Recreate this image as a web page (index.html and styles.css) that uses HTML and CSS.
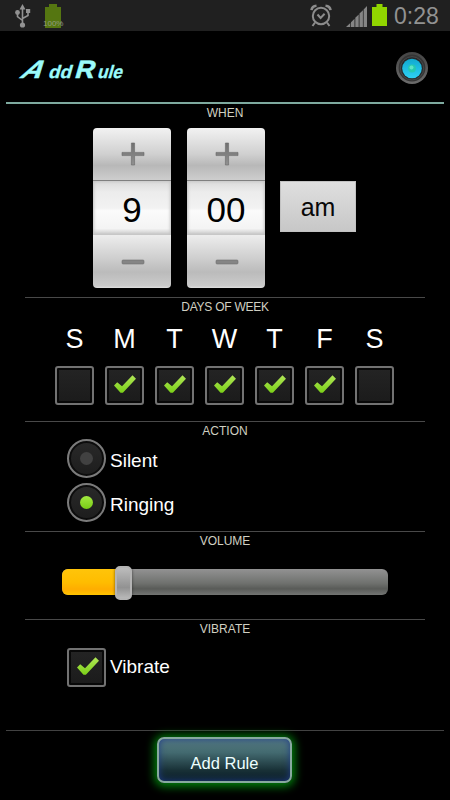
FILE: index.html
```html
<!DOCTYPE html>
<html lang="en">
<head>
<meta charset="utf-8">
<title>Add Rule</title>
<link rel="stylesheet" href="styles.css">
</head>
<body>
<svg class="defs" width="0" height="0" aria-hidden="true">
  <defs>
    <linearGradient id="green" x1="0" y1="0" x2="0" y2="1"><stop offset="0" stop-color="#b1e657"/><stop offset="1" stop-color="#7bd018"/></linearGradient>
    <linearGradient id="sign" x1="0" y1="0" x2="0" y2="1"><stop offset="0" stop-color="#707070"/><stop offset="1" stop-color="#909090"/></linearGradient>
    <symbol id="check" viewBox="0 0 24 20"><path fill="url(#green)" d="M1 11.5 4.2 8.3 9 12.2 19.5 1.2 23 4.700 9.900 18.800 7.500 18.800Z"/></symbol>
    <symbol id="plus" viewBox="0 0 24 24"><path fill="url(#sign)" stroke="#686868" stroke-width=".6" d="M10.4 1h3.2v9.4H23v3.2h-9.4V23h-3.2v-9.4H1v-3.2h9.4Z"/></symbol>
    <symbol id="minus" viewBox="0 0 24 24"><rect x="1" y="10" width="22" height="4" rx="1" fill="#858585" stroke="#707070" stroke-width=".6"/></symbol>
  </defs>
</svg>
<div class="screen">
  <div class="status">
    <svg class="usb" width="16" height="24" viewBox="0 0 16 24" fill="none" stroke="#929292" stroke-width="1.600"><path d="M7.500 4v17M2.500 9v3.500L7.500 16.500M13 7v4.500L7.500 14.500"/><path fill="#929292" stroke="none" d="M7.500 0 10.500 5.500H4.500ZM11 5h4.200v4H11z"/><circle cx="2.500" cy="8.500" r="2.400" fill="#929292" stroke="none"/><circle cx="7.500" cy="21" r="2.600" fill="#929292" stroke="none"/></svg>
    <div class="charge"><svg width="16" height="24" viewBox="0 0 16 24"><path fill="#557611" d="M4 0h8v3h4v21H0V3h4Z"/></svg><span>100%</span></div>
    <svg class="alarm" width="22" height="24" viewBox="0 0 22 24" fill="none" stroke="#8c8c8c" stroke-width="2"><circle cx="11" cy="12" r="8.2"/><path d="M7.5 10.5 10.6 14l4-4.3M5 18.5 2.5 22M17 18.5l2.5 3.5"/><path d="M1.5 6.2Q2 2 6.5 1.7M20.5 6.2Q20 2 15.5 1.7" stroke-width="2.6"/></svg>
    <svg class="signal" width="21" height="21" viewBox="0 0 21 21" fill="#858585"><path d="M0 21 4.300 17v4ZM5 16.2l3.500-3.500V21H5ZM9.3 11.8l3.400-3.300V21h-3.400ZM13.5 7.5l3.400-3.300V21h-3.400ZM17.6 3.4 21 0v21h-3.4Z"/></svg>
    <svg class="battery" width="15" height="22" viewBox="0 0 15 22"><path fill="#91d500" d="M4.5 0h6v3H15v19H0V3h4.500Z"/></svg>
    <span class="clock">0:28</span>
  </div>
  <header class="header">
    <h1 class="title"><span class="cap cap-a">A</span><span class="rest dd">dd</span><span class="cap cap-r">R</span><span class="rest ule">ule</span></h1>
    <svg class="speaker" width="34" height="34" viewBox="0 0 34 34">
      <defs>
        <linearGradient id="ring" x1="0" y1="0" x2="0" y2="1"><stop offset="0" stop-color="#444"/><stop offset="1" stop-color="#6c6c6c"/></linearGradient>
        <linearGradient id="cone" x1="0" y1="0" x2="0" y2="1"><stop offset="0" stop-color="#10a9cf"/><stop offset="1" stop-color="#2ed0f4"/></linearGradient>
      </defs>
      <circle cx="17" cy="17" r="16" fill="url(#ring)"/><circle cx="17" cy="17" r="13.4" fill="#353535"/><circle cx="17" cy="17.300" r="11.600" fill="#26292b" stroke="#565656" stroke-width=".7"/><circle cx="17" cy="17.500" r="9.800" fill="url(#cone)"/><circle cx="17" cy="17.500" r="3.900" fill="#25c9b0"/><circle cx="16.500" cy="16.500" r="2" fill="#5ce4c5"/>
    </svg>
  </header>
  <main class="form">
    <section class="section when">
      <h2>WHEN</h2>
      <div class="time">
        <div class="picker"><div class="step up"><svg width="24" height="24"><use href="#plus"/></svg></div><div class="value">9</div><div class="step down"><svg width="24" height="24"><use href="#minus"/></svg></div></div>
        <div class="picker"><div class="step up"><svg width="24" height="24"><use href="#plus"/></svg></div><div class="value">00</div><div class="step down"><svg width="24" height="24"><use href="#minus"/></svg></div></div>
        <div class="ampm">am</div>
      </div>
    </section>
    <section class="section days">
      <h2>DAYS OF WEEK</h2>
      <div class="week">
        <div class="day"><span>S</span><div class="box"></div></div>
        <div class="day"><span>M</span><div class="box"><svg width="24" height="20"><use href="#check"/></svg></div></div>
        <div class="day"><span>T</span><div class="box"><svg width="24" height="20"><use href="#check"/></svg></div></div>
        <div class="day"><span>W</span><div class="box"><svg width="24" height="20"><use href="#check"/></svg></div></div>
        <div class="day"><span>T</span><div class="box"><svg width="24" height="20"><use href="#check"/></svg></div></div>
        <div class="day"><span>F</span><div class="box"><svg width="24" height="20"><use href="#check"/></svg></div></div>
        <div class="day"><span>S</span><div class="box"></div></div>
      </div>
    </section>
    <section class="section action">
      <h2>ACTION</h2>
      <div class="options">
        <div class="option"><div class="radio"><i></i></div><span>Silent</span></div>
        <div class="option"><div class="radio on"><i></i></div><span>Ringing</span></div>
      </div>
    </section>
    <section class="section volume">
      <h2>VOLUME</h2>
      <div class="slider"><div class="fill"></div><div class="thumb"></div></div>
    </section>
    <section class="section vibrate">
      <h2>VIBRATE</h2>
      <div class="option"><div class="box"><svg width="24" height="20"><use href="#check"/></svg></div><span>Vibrate</span></div>
    </section>
  </main>
  <footer class="footer"><button class="submit">Add Rule</button></footer>
</div>
</body>
</html>
```
FILE: styles.css
```css
* { box-sizing: border-box; }
body { margin: 0; background: #000; color: #fff; font-family: "Liberation Sans", Arial, sans-serif; }
.defs { position: absolute; }
svg { display: block; flex: none; }
h1, h2 { margin: 0; font-weight: 400; }
.screen { width: 450px; height: 800px; display: flex; flex-direction: column; overflow: hidden; }

.status { height: 31px; flex: none; background: #202020; display: flex; align-items: flex-start; padding-top: 4px; }
.usb { margin: 0 0 0 15px; }
.charge { position: relative; margin-left: 14px; }
.charge span { position: absolute; left: -2px; top: 16px; font-size: 8px; line-height: 8px; color: #939c83; }
.alarm { margin-left: 249px; }
.signal { margin: 2px 0 0 14px; }
.battery { margin-left: 5px; }
.clock { margin-left: 7px; font-size: 23px; line-height: 24px; color: #929292; }

.header { height: 73px; flex: none; margin: 0 6px; border-bottom: 2px solid #7eaa9f; display: flex; justify-content: space-between; align-items: flex-start; padding: 20px 15px 0 13px; }
.title { display: flex; align-items: baseline; height: 30px; margin-top: 3px; color: #9bfbfb; font-weight: 700; line-height: 30px; }
.title span { display: block; transform-origin: 0 78%; }
.cap { font-size: 25px; -webkit-text-stroke: .5px #9bfbfb; }
.cap-a { width: 18px; margin-right: 11px; transform: skewX(-36deg) scaleX(1.15); }
.dd { width: 27px; margin-left: -1px; transform: skewX(-16deg) scaleX(1.05); }
.cap-r { width: 22px; transform: skewX(-16deg) scaleX(1.08); }
.rest { font-size: 18px; -webkit-text-stroke: .3px #9bfbfb; }
.ule { transform: skewX(-16deg) scaleX(.96); }

.form { margin: 0 25px; }
.section { border-bottom: 1px solid #494949; }
.section h2 { height: 16px; font-size: 12px; line-height: 18px; text-align: center; color: #d0d0c2; }
.when { height: 194px; }
.time { display: flex; align-items: center; padding: 8px 0 0 68px; gap: 16px; }
.picker { width: 78px; height: 160px; border-radius: 4px; overflow: hidden; display: flex; flex-direction: column; }
.step { display: grid; place-items: center; height: 53px; padding-left: 2px; }
.up { background: linear-gradient(#f2f2f2, #d0d0d0 50%, #b8b8b8 72%, #cecece); border-bottom: 1px solid #808080; }
.down { background: linear-gradient(#ededed, #d0d0d0 42%, #bbb 70%, #cbcbcb 96%, #e0e0e0); }
.value { height: 54px; color: #000; font-size: 35px; line-height: 58px; text-align: center; background: linear-gradient(#dadada, #ececec 20%, #f2f2f2 50%, #fbfbfb 55%, #f4f4f4 88%, #c5c5c5); box-shadow: inset 1px 0 3px #c5c5c5, inset -1px 0 3px #c5c5c5; }
.ampm { width: 76px; height: 51px; background: linear-gradient(#dfdfdf, #c7c7c7); border: 1px solid #c2c2c2; color: #080808; font-size: 25px; line-height: 51px; text-align: center; margin: -3px 0 0 -1px; }

.days { height: 124px; }
.section.days h2 { letter-spacing: -.25px; }
.week { display: grid; grid-template-columns: repeat(7, 50px); justify-content: center; padding-top: 8px; margin-right: 2px; }
.day { display: flex; flex-direction: column; align-items: center; }
.day > span { font-size: 27px; line-height: 34px; height: 44px; padding-left: 1px; }
.box { width: 39px; height: 39px; border: 2px solid #727272; border-radius: 3px; background: linear-gradient(#242424, #1b1b1b); box-shadow: inset 0 0 0 2px #080808; display: grid; place-items: center; }
.box svg { margin: -3px 0 0 2px; }

.action { height: 110px; }
.options { display: flex; flex-direction: column; gap: 5px; margin-top: 1px; }
.option { display: flex; align-items: center; gap: 4px; margin-left: 42px; }
.option > span { font-size: 19px; line-height: 24px; padding-top: 5px; }
.radio { width: 39px; height: 39px; border: 2px solid #7b7b7b; border-radius: 50%; background: linear-gradient(#292929, #1d1d1d); box-shadow: inset 0 0 0 2px #0c0c0c; display: grid; place-items: center; }
.radio i { width: 13px; height: 13px; border-radius: 50%; background: #414141; }
.radio.on i { background: linear-gradient(#a2e940, #79cc16); }

.volume { height: 88px; }
.slider { width: 326px; height: 26px; margin: 21px 0 0 37px; border-radius: 6px; background: linear-gradient(#929292, #6f716e 55%, #595b58 76%, #737573); position: relative; }
.fill { width: 60px; height: 26px; border-radius: 6px 0 0 6px; background: linear-gradient(#ffc40a, #ffbd00 50%, #ffad00 78%, #ffc400); }
.thumb { position: absolute; left: 53px; top: -3px; width: 17px; height: 34px; border: 2px solid #b4b4b4; border-radius: 5px; background: linear-gradient(#bcbcbc, #929292 65%, #b8b8b8); box-shadow: 0 0 3px rgba(0,0,0,.55); }
.vibrate { height: 111px; margin: 0 -19px; border-color: #424242; background: linear-gradient(#494949, #494949) 0 0 / 0 0 no-repeat; }
.vibrate .option { margin: 12px 0 0 61px; }
.vibrate .option > span { padding: 0 0 1px; }

.footer { display: flex; justify-content: center; padding-top: 6px; }
.submit { width: 135px; height: 46px; margin-right: 1px; padding: 5px 0 0; border: 2px solid #87a99f; border-radius: 7px; color: #edffff; font: 16.5px/22px "Liberation Sans", Arial, sans-serif; background: linear-gradient(#557a80, #436a70 32%, #183036 75%, #0c2029); box-shadow: inset 0 0 7px #203c88, 0 1px 8px 3px #007c0b; }
```
